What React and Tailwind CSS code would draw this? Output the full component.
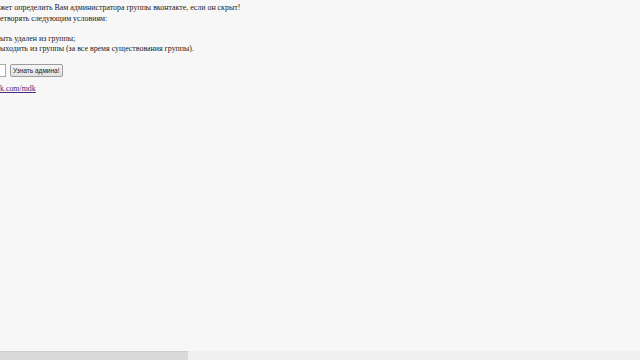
function Line({ hidden, children, className = "" }) {
  // hidden part of the line sits left of the viewport edge
  return (
    <div className={`flex whitespace-nowrap ${className}`}>
      <span className="w-0 flex justify-end overflow-visible">{hidden}</span>
      <span>{children}</span>
    </div>
  );
}

export default function App() {
  return (
    <div className="w-[640px] h-[360px] bg-[#f7f7f7] flex flex-col overflow-hidden font-['Liberation_Serif',serif] text-[#1a1a1a] text-[7.9px] leading-[10.5px]">
      <div className="flex-1 overflow-hidden pt-[3px]">
        <Line hidden="Скрипт мо">жет определить Вам администратора группы вконтакте, если он скрыт!</Line>
        <Line hidden="Администратор должен удовл" className="mt-[0.5px]">етворять следующим условиям:</Line>
        <div className="h-[9px]" />
        <Line hidden="1. Не б">ыть удален из группы;</Line>
        <Line hidden="2. Не в">ыходить из группы (за все время существования группы).</Line>
        <div className="mt-[9px] flex items-center">
          <span className="w-0 flex justify-end">
            <input
              type="text"
              className="shrink-0 w-[60px] h-[13px] mr-[-6px] bg-white border border-[#a9a9a9] outline-none"
            />
          </span>
          <button
            type="button"
            className="ml-[10px] h-[13px] px-[2px] bg-gradient-to-b from-[#f4f4f4] to-[#e2e2e2] border border-[#9c9c9c] rounded-[2px] text-[6.5px] leading-[11px] text-[#222] font-['Liberation_Sans',sans-serif] whitespace-nowrap"
          >
            Узнать админа!
          </button>
        </div>
        <Line hidden="v" className="mt-[7px]">
          <a href="#" className="text-[#4b2a80] underline">k.com/mdk</a>
        </Line>
      </div>
      <div className="h-[9px] bg-[#f0f0f0] flex">
        <div className="w-[188px] h-full bg-[#d9d9d9] border-t border-[#cfcfcf]" />
      </div>
    </div>
  );
}
